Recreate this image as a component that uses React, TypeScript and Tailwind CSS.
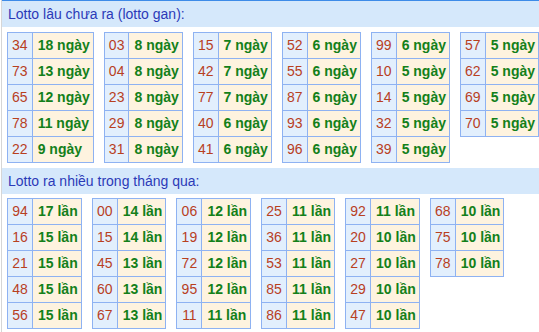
import React from 'react'

type Item = [string, string]

const ganTables: Item[][] = [
  [['34', '18 ngày'], ['73', '13 ngày'], ['65', '12 ngày'], ['78', '11 ngày'], ['22', '9 ngày']],
  [['03', '8 ngày'], ['04', '8 ngày'], ['23', '8 ngày'], ['29', '8 ngày'], ['31', '8 ngày']],
  [['15', '7 ngày'], ['42', '7 ngày'], ['77', '7 ngày'], ['40', '6 ngày'], ['41', '6 ngày']],
  [['52', '6 ngày'], ['55', '6 ngày'], ['87', '6 ngày'], ['93', '6 ngày'], ['96', '6 ngày']],
  [['99', '6 ngày'], ['10', '5 ngày'], ['14', '5 ngày'], ['32', '5 ngày'], ['39', '5 ngày']],
  [['57', '5 ngày'], ['62', '5 ngày'], ['69', '5 ngày'], ['70', '5 ngày']],
]

const hotTables: Item[][] = [
  [['94', '17 lần'], ['16', '15 lần'], ['21', '15 lần'], ['48', '15 lần'], ['56', '15 lần']],
  [['00', '14 lần'], ['15', '14 lần'], ['45', '13 lần'], ['60', '13 lần'], ['67', '13 lần']],
  [['06', '12 lần'], ['19', '12 lần'], ['72', '12 lần'], ['95', '12 lần'], ['11', '11 lần']],
  [['25', '11 lần'], ['36', '11 lần'], ['53', '11 lần'], ['85', '11 lần'], ['86', '11 lần']],
  [['92', '11 lần'], ['20', '10 lần'], ['27', '10 lần'], ['29', '10 lần'], ['47', '10 lần']],
  [['68', '10 lần'], ['75', '10 lần'], ['78', '10 lần']],
]

function LotoTable({ rows }: { rows: Item[] }) {
  return (
    <table className="border-collapse self-start">
      <tbody>
        {rows.map(([num, val]) => (
          <tr key={num} className="h-[26px]">
            <td className="border border-[#8eb2f2] bg-[#e2effd] w-[25px] px-0 text-center text-[14px] text-[#b8401f]">
              {num}
            </td>
            <td className="border border-[#8eb2f2] bg-[#fef3df] pl-[5px] pr-[3px] text-left text-[14px] font-bold text-[#13801a] whitespace-nowrap">
              {val}
            </td>
          </tr>
        ))}
      </tbody>
    </table>
  )
}

function Header({ title }: { title: string }) {
  return (
    <div className="h-[26px] bg-[#d5e8fb] pl-[6px] flex items-center text-[14px] text-[#2b3ab8]">
      {title}
    </div>
  )
}

export default function App() {
  return (
    <div
      className="w-[538px] h-[332px] ml-px border-l border-[#d6d6d6] bg-white overflow-hidden"
      style={{ fontFamily: '"Liberation Sans", Arial, sans-serif' }}
    >
      <div className="border-t border-[#3d8be8]">
        <Header title="Lotto lâu chưa ra (lotto gan):" />
      </div>
      <div className="flex gap-[10px] pl-[5px] mt-[5px]">
        {ganTables.map((t, i) => (
          <LotoTable key={i} rows={t} />
        ))}
      </div>
      <div className="mt-[5px]">
        <Header title="Lotto ra nhiều trong tháng qua:" />
      </div>
      <div className="flex gap-[10px] pl-[5px] mt-[4px]">
        {hotTables.map((t, i) => (
          <LotoTable key={i} rows={t} />
        ))}
      </div>
    </div>
  )
}
